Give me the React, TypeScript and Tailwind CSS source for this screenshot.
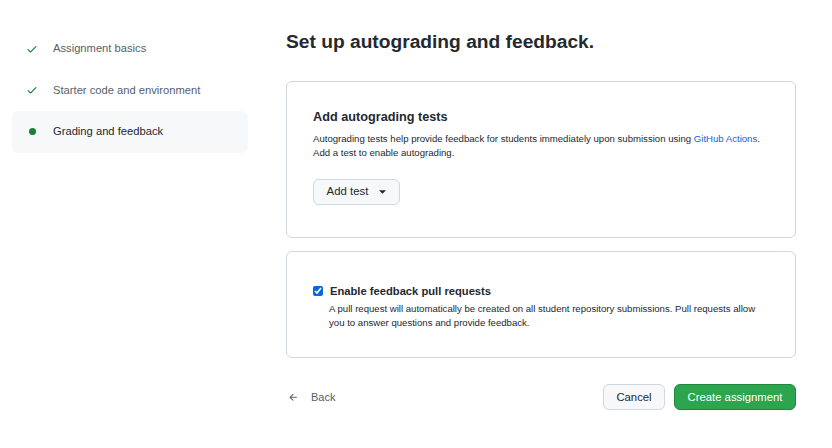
import React from "react";

const steps = [
  { label: "Assignment basics", done: true },
  { label: "Starter code and environment", done: true },
  { label: "Grading and feedback", done: false },
];

const Check = () => (
  <svg width="12" height="12" viewBox="0 0 16 16" fill="#1a7f37">
    <path d="M13.78 4.22a.75.75 0 0 1 0 1.06l-7.25 7.25a.75.75 0 0 1-1.06 0L2.22 9.28a.75.75 0 0 1 1.06-1.06L6 10.94l6.72-6.72a.75.75 0 0 1 1.06 0Z" />
  </svg>
);

export default function App() {
  return (
    <div className="flex min-h-screen bg-white text-[#24292f]" style={{ fontFamily: '"Liberation Sans", Arial, sans-serif' }}>
      {/* Sidebar */}
      <aside className="w-[236px] ml-3 pt-[28px] shrink-0">
        {steps.map((s, i) => (
          <div
            key={i}
            className={`flex items-center h-[41.5px] pl-[14px] rounded-md ${!s.done ? "bg-[#f6f8fa]" : ""}`}
          >
            <span className="w-3 flex justify-center">
              {s.done ? <Check /> : <span className="w-[7px] h-[7px] rounded-full bg-[#1a7f37]" />}
            </span>
            <span className={`ml-[15px] text-[11.2px] ${s.done ? "text-[#57606a]" : "text-[#24292f]"}`}>
              {s.label}
            </span>
          </div>
        ))}
      </aside>

      {/* Main */}
      <main className="ml-[38px] w-[510px] pt-[30px]">
        <h1 className="text-[19.2px] leading-6 font-bold">Set up autograding and feedback.</h1>

        <section className="mt-[27px] border border-[#d0d7de] rounded-md px-[26px] pt-[26px] pb-[32px]">
          <h2 className="text-[12.7px] leading-[18px] font-bold">Add autograding tests</h2>
          <p className="mt-[6px] text-[9.6px] leading-[14px] text-[#24292f] whitespace-nowrap">
            Autograding tests help provide feedback for students immediately upon submission using{" "}
            <a className="text-[#0969da]">GitHub Actions</a>.
            <br />
            Add a test to enable autograding.
          </p>
          <button className="mt-[19px] h-[26px] w-[87px] flex items-center justify-center gap-[11px] rounded-md border border-[#d0d7de] bg-[#f6f8fa] text-[11.4px]">
            Add test
            <svg width="7" height="4" viewBox="0 0 8 4" fill="#24292f">
              <path d="M0 0h8L4 4z" />
            </svg>
          </button>
        </section>

        <section className="mt-[13px] border border-[#d0d7de] rounded-md px-[26px] pt-[30px] pb-[27px]">
          <label className="flex items-center gap-[7px]">
            <input type="checkbox" defaultChecked className="w-[10px] h-[10px] m-0 accent-[#0969da]" />
            <span className="text-[11.2px] leading-[18px] font-bold">Enable feedback pull requests</span>
          </label>
          <p className="mt-[2px] ml-[16px] text-[9.6px] leading-[14px] text-[#24292f] whitespace-nowrap">
            A pull request will automatically be created on all student repository submissions. Pull requests allow
            <br />
            you to answer questions and provide feedback.
          </p>
        </section>

        <footer className="mt-[26px] flex items-center justify-between">
          <a className="flex items-center gap-3 text-[11px] text-[#57606a] pl-[2px]">
            <svg width="11" height="11" viewBox="0 0 16 16" fill="#57606a">
              <path d="M7.78 12.53a.75.75 0 0 1-1.06 0L2.47 8.28a.75.75 0 0 1 0-1.06l4.25-4.25a.751.751 0 0 1 1.042.018.751.751 0 0 1 .018 1.042L4.81 7h7.44a.75.75 0 0 1 0 1.5H4.81l2.97 2.97a.75.75 0 0 1 0 1.06Z" />
            </svg>
            Back
          </a>
          <div className="flex gap-[9px]">
            <button className="h-[26px] w-[62px] rounded-md border border-[#d0d7de] bg-[#f6f8fa] text-[11.3px]">
              Cancel
            </button>
            <button className="h-[26px] w-[122px] rounded-md border border-[#1f883d] bg-[#2da44e] text-white text-[11.3px]">
              Create assignment
            </button>
          </div>
        </footer>
      </main>
    </div>
  );
}
